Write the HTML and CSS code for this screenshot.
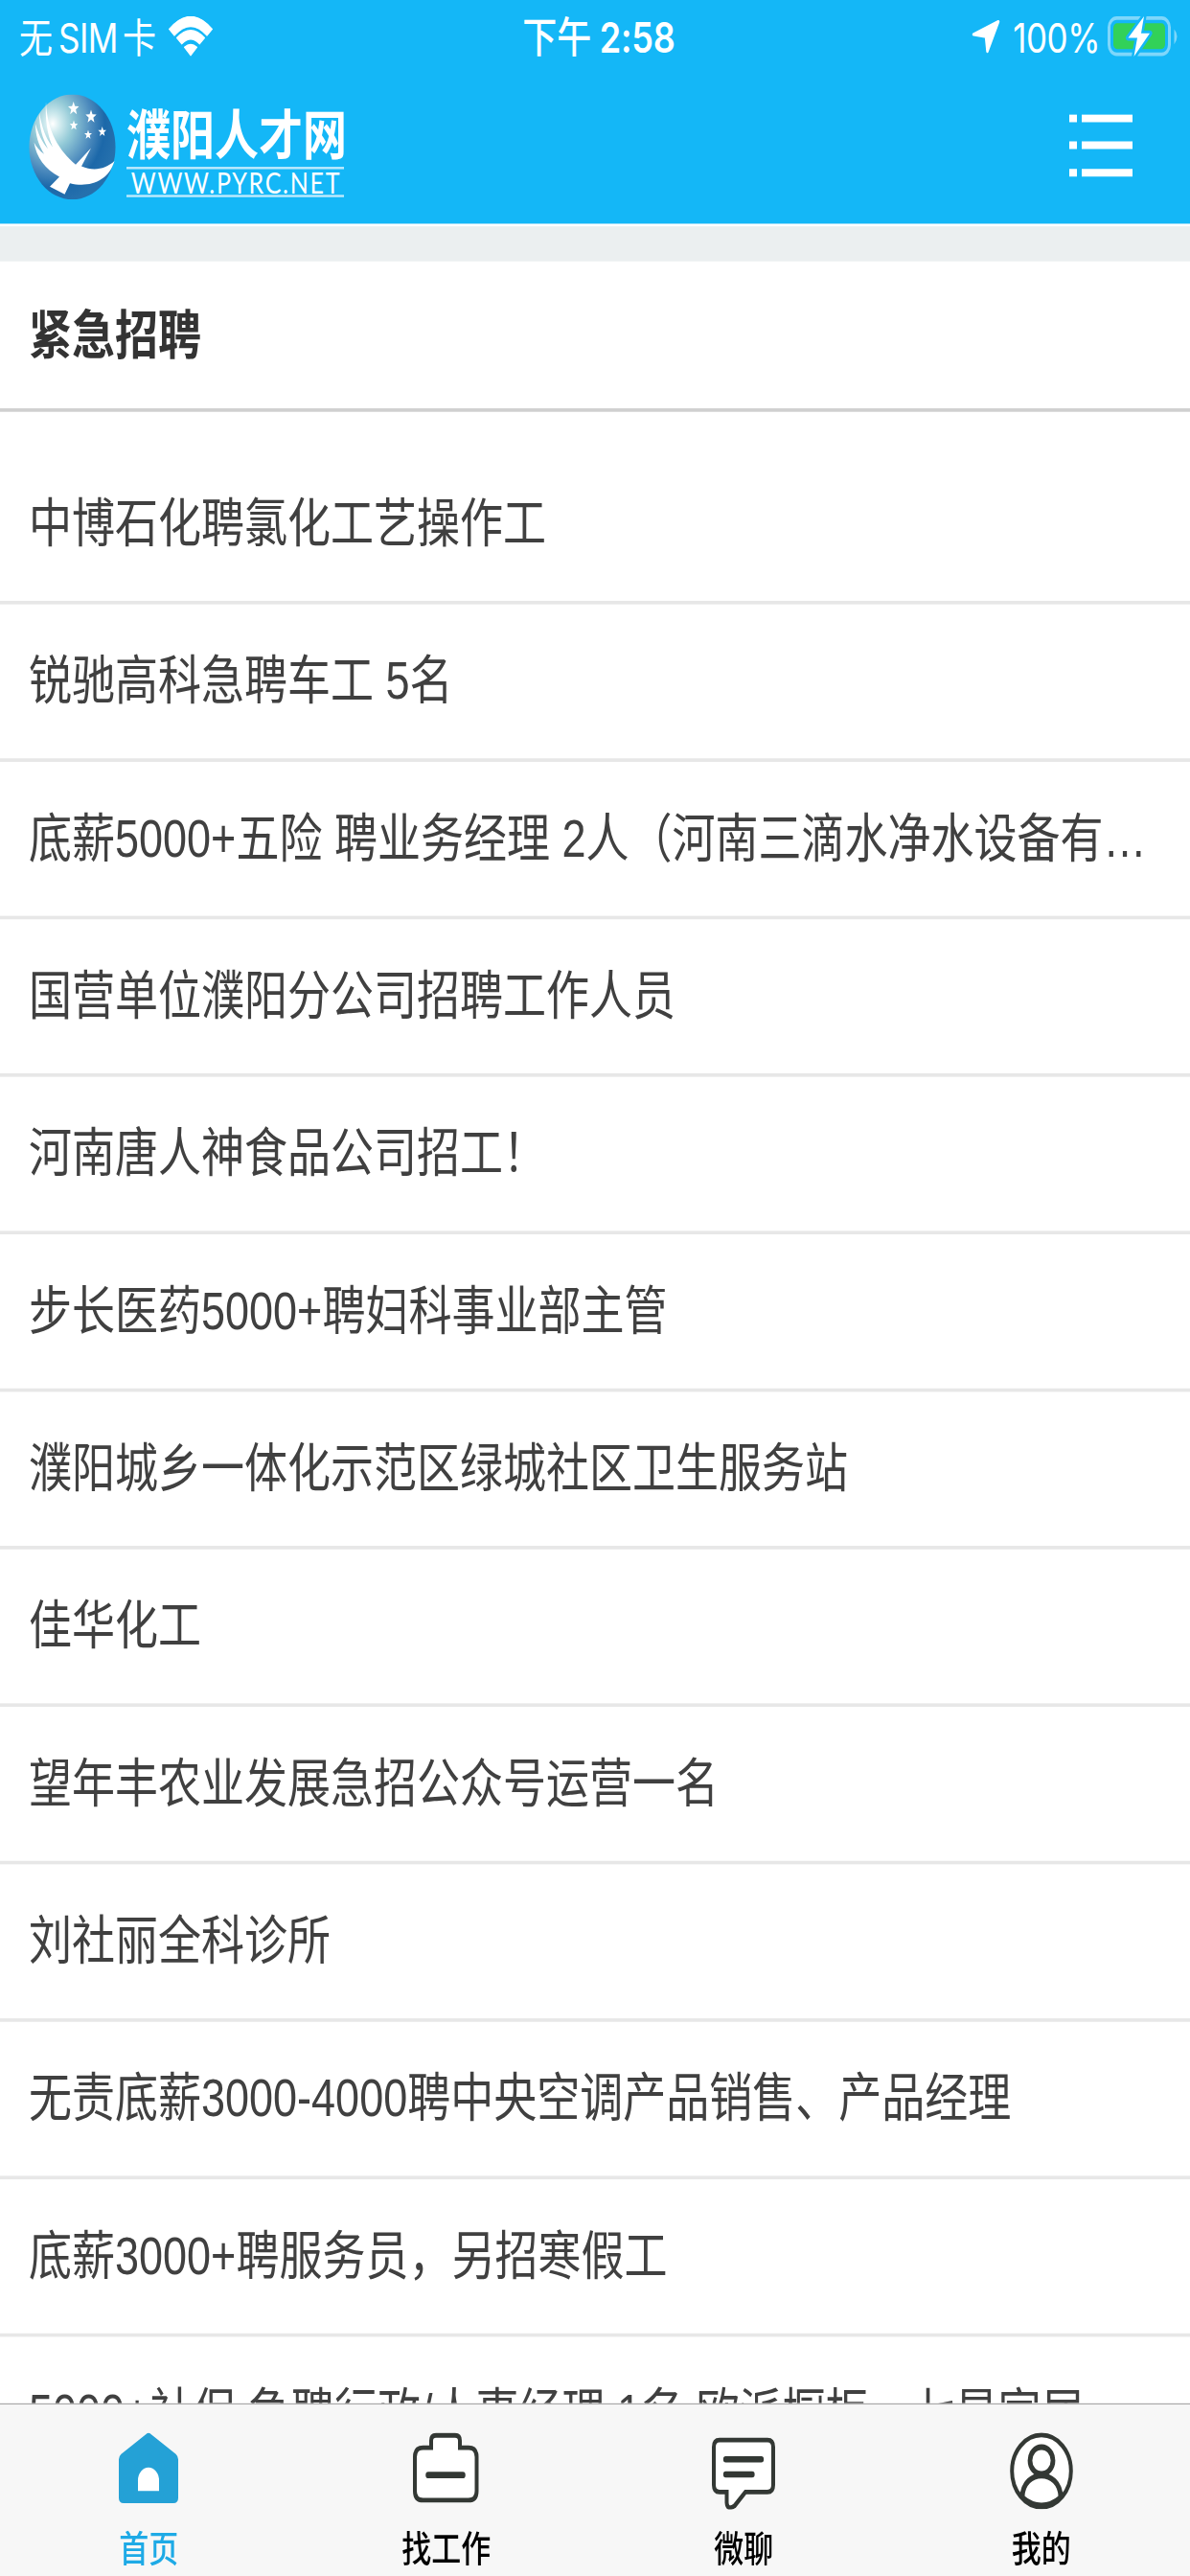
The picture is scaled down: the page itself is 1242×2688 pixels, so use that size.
FILE: index.html
```
<!DOCTYPE html>
<html lang="zh-CN">
<head>
    <meta charset="UTF-8">
    <meta name="viewport" content="width=device-width, initial-scale=1.0">
    <title>濮阳人才网</title>
    <link rel="stylesheet" href="styles.css">
</head>
<body>
    <div class="screen">
        <header class="header">
            <div class="status">
                <div class="status-left">
                    <span class="carrier">无<span class="sim">SIM</span>卡</span>
                    <svg class="wifi" width="46" height="35" viewBox="0 0 46 35">
                        <path d="M0.5 11 Q23 -10.5 45.500 11 L40 16.500 Q23 1 6 16.500 Z" fill="#fff" stroke="#fff" stroke-linejoin="round"/>
                        <path d="M8.500 18.500 Q23 5.500 37.500 18.500 L32.300 23.700 Q23 15.500 13.700 23.700 Z" fill="#fff" stroke="#fff" stroke-linejoin="round"/>
                        <path d="M16.500 26.500 Q23 21.500 29.500 26.500 L23 33.500 Z" fill="#fff" stroke="#fff" stroke-linejoin="round"/>
                    </svg>
                </div>
                <div class="time"><span class="ampm">下午</span> 2:58</div>
                <div class="status-right">
                    <svg class="arrow" width="30" height="29" viewBox="0 0 30 29">
                        <path d="M28 1.500 L16.500 27 L15 14.500 L2 12.500 Z" fill="#fff" stroke="#fff" stroke-width="2.500" stroke-linejoin="round"/>
                    </svg>
                    <span class="percent">100%</span>
                    <svg class="battery" width="74" height="37" viewBox="0 0 74 37">
                        <rect x="1.500" y="2.500" width="63" height="31" rx="8" fill="none" stroke="#fff" stroke-opacity=".45" stroke-width="3"/>
                        <rect x="6" y="7" width="54" height="22" rx="4" fill="#32d158"/>
                        <path d="M69.500 12 Q75.500 18 69.500 25 Z" fill="#fff" fill-opacity=".45"/>
                        <path d="M38 1 L21.500 19.500 H31 L27.500 35.500 L44 15.500 H35 Z" fill="#fff" stroke="#14b7f7" stroke-width="5" paint-order="stroke" stroke-linejoin="round"/>
                    </svg>
                </div>
            </div>
            <div class="nav">
                <div class="logo">
                    <svg width="92" height="90" viewBox="0 0 92 90">
                        <defs>
                            <radialGradient id="globe" gradientUnits="userSpaceOnUse" cx="25" cy="25" r="68">
                                <stop offset="0" stop-color="#fff"/>
                                <stop offset=".12" stop-color="#cfeaee"/>
                                <stop offset=".3" stop-color="#93cad7"/>
                                <stop offset=".6" stop-color="#4c8abd"/>
                                <stop offset=".8" stop-color="#1c68a9"/>
                                <stop offset="1" stop-color="#2570ad"/>
                            </radialGradient>
                            <path id="star" d="M0 -6 L1.500 -2 L5.700 -1.900 L2.400 .8 L3.500 4.900 L0 2.500 L-3.500 4.900 L-2.400 .8 L-5.700 -1.900 L-1.500 -2 Z" fill="#fff"/>
                        </defs>
                        <circle cx="45.500" cy="45" r="45" fill="url(#globe)"/>
                        <use href="#star" x="46.700" y="12"/>
                        <use href="#star" x="65" y="19"/>
                        <use href="#star" transform="translate(47 26.500) scale(.75)"/>
                        <use href="#star" transform="translate(62 34.500) scale(.7)"/>
                        <use href="#star" transform="translate(76.700 32) scale(.75)"/>
                        <path d="M18 6 C19 32 32 48 49 60 L65 46 L55 61.500 C68 66 80 64 89.500 57 C83 75 62 80 43 76 L37.500 85.500 L22 79 L32 70.500 C17 64 8 54 5.500 41 C8 45 11 48 16 51 C10 43 7 35 7 25 C10 34 14 41 20 46.500 C14 37 11 28 11 16 C14 28 17 37 25 45 C19 34 17 20 18 6 Z" fill="#fff"/>
                    </svg>
                    <div class="logo-text">
                        <div class="logo-name">濮阳人才网</div>
                        <div class="logo-url">WWW.PYRC.NET</div>
                    </div>
                </div>
                <svg class="menu" width="66" height="54" viewBox="0 0 66 54">
                    <path d="M0 3.500 H8 M13 3.500 H66 M0 26.500 H8 M13 26.500 H66 M0 50 H8 M13 50 H66" stroke="#fff" stroke-width="6.500"/>
                </svg>
            </div>
        </header>

        <div class="gap"></div>

        <main class="content">
            <h1 class="title">紧急招聘</h1>
            <ul class="list">
                <li>中博石化聘氯化工艺操作工</li>
                <li>锐驰高科急聘车工 5名</li>
                <li>底薪5000+五险 聘业务经理 2人（河南三滴水净水设备有…</li>
                <li>国营单位濮阳分公司招聘工作人员</li>
                <li>河南唐人神食品公司招工！</li>
                <li>步长医药5000+聘妇科事业部主管</li>
                <li>濮阳城乡一体化示范区绿城社区卫生服务站</li>
                <li>佳华化工</li>
                <li>望年丰农业发展急招公众号运营一名</li>
                <li>刘社丽全科诊所</li>
                <li>无责底薪3000-4000聘中央空调产品销售、产品经理</li>
                <li>底薪3000+聘服务员，另招寒假工</li>
                <li>5000+社保 急聘行政/人事经理 1名 欧派橱柜、七星家居</li>
            </ul>
        </main>

        <nav class="tabbar">
            <a class="tab active">
                <svg width="62" height="66" viewBox="0 0 62 66">
                    <path d="M28.500 1.500 Q31 -.5 33.500 1.500 L59.500 18.500 Q62 20.500 62 23 V56 Q62 60.500 57 60.500 H5 Q0 60.500 0 56 V23 Q0 20.500 2.500 18.500 Z" fill="#24a1d6"/>
                    <path d="M20 50 V41 A11 11 0 0 1 42 41 V50 Z" fill="#fff"/>
                </svg>
                <span>首页</span>
            </a>
            <a class="tab">
                <svg width="69" height="66" viewBox="0 0 69 66">
                    <path d="M19 13 V7 Q19 2.500 24 2.500 H44 Q49 2.500 49 7 V13 H58 Q66.500 13 66.500 21 V50 Q66.500 58 58 58 H10.500 Q2 58 2 50 V21 Q2 13 10.500 13 Z" fill="#fff" stroke="#333834" stroke-width="4"/>
                    <path d="M16 36.500 H52" stroke="#333834" stroke-width="5.500" stroke-linecap="round"/>
                </svg>
                <span>找工作</span>
            </a>
            <a class="tab">
                <svg width="66" height="66" viewBox="0 0 66 66">
                    <path d="M8 6.500 H58 Q64 6.500 64 12.500 V45 Q64 51 58 51 H35 L23.500 63 Q16 67 15.500 60 V51 H8 Q2 51 2 45 V12.500 Q2 6.500 8 6.500 Z" fill="#fff" stroke="#333834" stroke-width="4"/>
                    <path d="M14.500 23 H51.500 M14.500 36 H42" stroke="#333834" stroke-width="5.300" stroke-linecap="round"/>
                </svg>
                <span>微聊</span>
            </a>
            <a class="tab">
                <svg width="66" height="66" viewBox="0 0 66 66">
                    <circle cx="33" cy="33" r="30.800" fill="#fff" stroke="#333834" stroke-width="4"/>
                    <ellipse cx="33" cy="24" rx="12" ry="11.500" fill="none" stroke="#333834" stroke-width="4.800"/>
                    <path d="M13 55 C14 31 52 31 53 55" fill="none" stroke="#333834" stroke-width="4.800"/>
                    <path d="M13 55 Q33 69 53 55" fill="none" stroke="#333834" stroke-width="3.500"/>
                </svg>
                <span>我的</span>
            </a>
        </nav>
    </div>
</body>
</html>
```

FILE: styles.css
```
* {
    box-sizing: border-box;
}

body {
    margin: 0;
    background-color: #fff;
    font-family: "Liberation Sans", "Noto Sans CJK SC", sans-serif;
    height: 2688px;
    overflow: hidden;
}

/* 1242x2208 layout, stretched to a tall screen */
.screen {
    width: 1242px;
    height: 2208px;
    display: flex;
    flex-direction: column;
    overflow: hidden;
    transform: scaleY(1.21739);
    transform-origin: 0 0;
}

svg {
    display: block;
    flex: none;
}

.header {
    height: 192px;
    flex: none;
    background-color: #14b7f7;
    color: #fff;
}

.status {
    height: 60px;
    display: grid;
    grid-template-columns: 1fr auto 1fr;
    align-items: center;
    padding: 0 12px 0 20px;
    font-family: Inter, "Noto Sans CJK SC", sans-serif;
    font-size: 36px;
    line-height: 60px;
}

.status-left, .status-right {
    display: flex;
    align-items: center;
}

.status-right {
    justify-content: flex-end;
}

.carrier {
    font-size: 35px;
    padding-top: 2px;
}

.sim {
    margin: 0 5px 0 6px;
    letter-spacing: -0.5px;
}

.wifi {
    margin-left: 13px;
}

.time {
    font-weight: 600;
    font-size: 36px;
    padding-top: 2px;
    letter-spacing: -0.2px;
}

.ampm {
    font-weight: 500;
}

.percent {
    margin: 0 8px 0 13px;
    padding-top: 2px;
    font-size: 35px;
    letter-spacing: -0.5px;
}

.nav {
    height: 132px;
    display: flex;
    justify-content: space-between;
    align-items: flex-start;
    padding: 21px 60px 0 30px;
}

.logo {
    display: flex;
}

.logo-text {
    width: 227px;
    margin-left: 10px;
    padding-top: 8px;
}

.logo-name {
    height: 54px;
    line-height: 46px;
    font-family: "Noto Sans CJK SC", sans-serif;
    font-size: 46px;
    font-weight: bold;
    white-space: nowrap;
}

.logo-url {
    height: 26px;
    padding-left: 2px;
    border-top: 2px solid #bdeafd;
    border-bottom: 2px solid #bdeafd;
    font-family: Lato, sans-serif;
    font-size: 25px;
    letter-spacing: 1.7px;
    line-height: 22px;
    text-align: center;
    white-space: nowrap;
}

.menu {
    margin-top: 17px;
}

.gap {
    height: 32px;
    flex: none;
    border-top: 2px solid #fff;
    background-color: #ebeff0;
}

.content {
    flex: 1;
    min-height: 0;
    overflow: hidden;
}

.title {
    margin: 0;
    height: 129px;
    padding-left: 30px;
    border-bottom: 3px solid #d0d0d0;
    color: #333;
    font-size: 45px;
    font-weight: bold;
    line-height: 127px;
}

.list {
    margin: 0;
    padding: 30px 0 0;
    list-style: none;
}

.list li {
    height: 135px;
    padding: 0 30px;
    border-bottom: 3px solid #e7e7e7;
    color: #404040;
    font-size: 45px;
    line-height: 132px;
    white-space: nowrap;
}

.tabbar {
    height: 148px;
    flex: none;
    display: flex;
    border-top: 1px solid #a9a9a9;
    background-color: #f7f7f7;
}

.tab {
    flex: 1;
    display: flex;
    flex-direction: column;
    align-items: center;
    padding-top: 24px;
    color: #000;
    font-size: 31px;
    font-weight: 500;
    line-height: 40px;
}

.tab span {
    margin-top: 15px;
}

.active {
    color: #1eaae6;
}
```
